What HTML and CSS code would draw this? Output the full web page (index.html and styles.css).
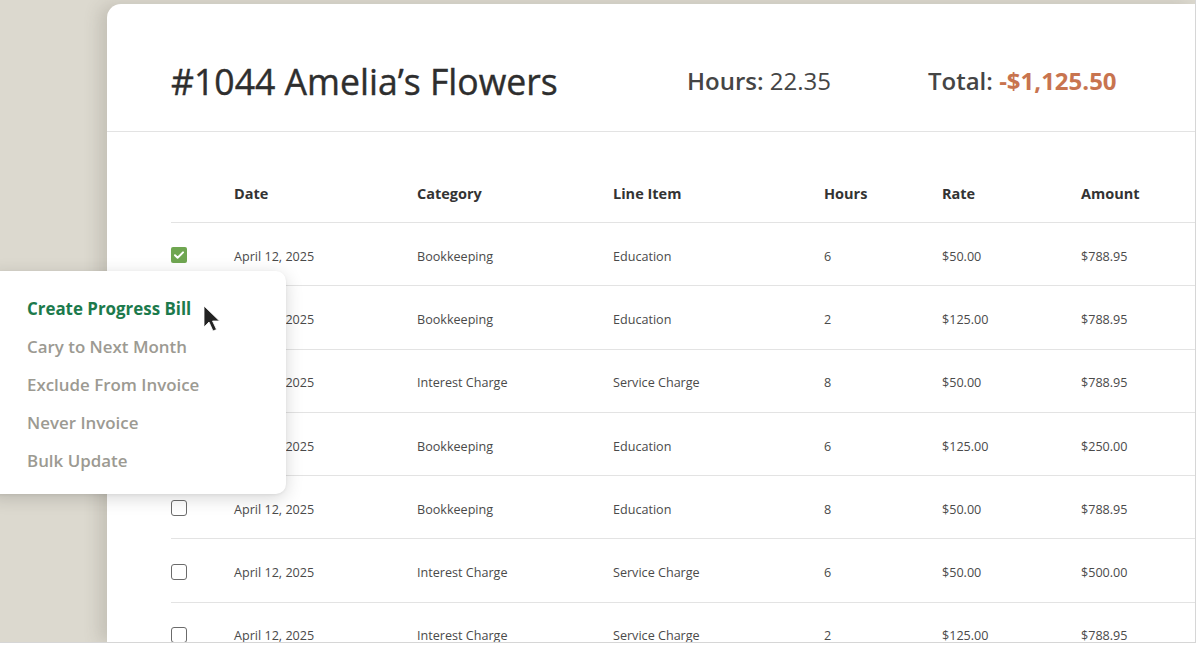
FILE: index.html
```html
<!DOCTYPE html>
<html>
<head>
<meta charset="utf-8">
<link rel="stylesheet" href="styles.css">
</head>
<body>
<div class="frame">
  <div class="card">
    <div class="card-head">
      <h1 class="title">#1044 Amelia’s Flowers</h1>
      <div class="stat">Hours: <span class="stat-val">22.35</span></div>
      <div class="stat">Total: <span class="stat-neg">-$1,125.50</span></div>
    </div>
    <div class="table">
      <div class="row head">
        <span></span><span>Date</span><span>Category</span><span>Line Item</span><span>Hours</span><span>Rate</span><span>Amount</span>
      </div>
      <div class="row"><span class="cb checked"><svg viewBox="0 0 16 16" width="16" height="16"><path d="M4 8.3l2.6 2.5L12 5.4" fill="none" stroke="#fff" stroke-width="2" stroke-linecap="round" stroke-linejoin="round"/></svg></span><span>April 12, 2025</span><span>Bookkeeping</span><span>Education</span><span>6</span><span>$50.00</span><span>$788.95</span></div>
      <div class="row"><span class="cb checked"></span><span>April 12, 2025</span><span>Bookkeeping</span><span>Education</span><span>2</span><span>$125.00</span><span>$788.95</span></div>
      <div class="row"><span class="cb checked"></span><span>April 12, 2025</span><span>Interest Charge</span><span>Service Charge</span><span>8</span><span>$50.00</span><span>$788.95</span></div>
      <div class="row"><span class="cb checked"></span><span>April 12, 2025</span><span>Bookkeeping</span><span>Education</span><span>6</span><span>$125.00</span><span>$250.00</span></div>
      <div class="row"><span class="cb"></span><span>April 12, 2025</span><span>Bookkeeping</span><span>Education</span><span>8</span><span>$50.00</span><span>$788.95</span></div>
      <div class="row"><span class="cb"></span><span>April 12, 2025</span><span>Interest Charge</span><span>Service Charge</span><span>6</span><span>$50.00</span><span>$500.00</span></div>
      <div class="row"><span class="cb"></span><span>April 12, 2025</span><span>Interest Charge</span><span>Service Charge</span><span>2</span><span>$125.00</span><span>$788.95</span></div>
    </div>
  </div>
  <div class="menu">
    <div class="menu-item active">Create Progress Bill</div>
    <div class="menu-item">Cary to Next Month</div>
    <div class="menu-item">Exclude From Invoice</div>
    <div class="menu-item">Never Invoice</div>
    <div class="menu-item">Bulk Update</div>
  </div>
  <svg class="cursor" viewBox="0 0 20 28" width="20" height="28"><path d="M2 1 L2 22 L7 17 L11 26 L14.5 24.5 L10.5 16 L17.5 16 Z" fill="#222" stroke="#fff" stroke-width="0.8" stroke-linejoin="round"/></svg>
</div>
</body>
</html>
```

FILE: styles.css
```css
* { box-sizing: border-box; }
html, body { margin: 0; padding: 0; background: #fff; }
body { font-family: "Open Sans", "Noto Sans", sans-serif; }

.frame {
  position: relative;
  width: 1196px;
  height: 643px;
  background: #dcd9cf;
  border-right: 1px solid #d6d6d6;
  border-bottom: 1px solid #d6d6d6;
  overflow: hidden;
  padding: 4px 0 0 107px;
}

.card {
  height: 100%;
  background: #fff;
  border-top-left-radius: 14px;
  box-shadow: -8px 0 16px rgba(90, 85, 70, 0.18);
}

.card-head {
  height: 128px;
  display: grid;
  grid-template-columns: 516px 241px auto;
  align-items: center;
  padding: 26px 0 0 64px;
  border-bottom: 1px solid #e3e3e3;
}

.title {
  margin: 0;
  font-size: 35.6px;
  font-weight: 400;
  color: #2e2e2e;
  -webkit-text-stroke: 0.4px #2e2e2e;
}

.stat {
  font-size: 24px;
  color: #454545;
  font-weight: 600;
}
.stat-val { font-weight: 400; }
.stat-neg { color: #c8744f; font-weight: 700; }

.table { padding-left: 64px; }

.row {
  display: grid;
  grid-template-columns: 63px 183px 196px 211px 118px 139px 1fr;
  align-items: center;
  height: 63.3px;
  border-bottom: 1px solid #e3e3e3;
  font-size: 12.6px;
  color: #4a4a4a;
}
.row > span { padding-top: 4px; }

.row.head {
  height: 91px;
  align-items: end;
  padding-bottom: 18px;
  font-size: 14.5px;
  font-weight: 700;
  color: #333;
  line-height: 20px;
}
.row.head > span { padding-top: 0; }

.cb {
  width: 16px;
  height: 16px;
  border: 1.5px solid #6b6b6b;
  border-radius: 3px;
  display: block;
  padding: 0 !important;
  margin-top: 2px;
}
.cb.checked {
  background: #6fa651;
  border: none;
  border-radius: 2px;
}
.cb svg { display: block; }

.menu {
  position: absolute;
  left: -12px;
  top: 271px;
  width: 298px;
  height: 223px;
  background: #fff;
  border-radius: 10px;
  box-shadow: 0 4px 18px rgba(0, 0, 0, 0.16), 0 1px 3px rgba(0,0,0,0.06);
  padding: 19px 0 0 39px;
}

.menu-item {
  height: 38px;
  line-height: 38px;
  font-size: 16.9px;
  font-weight: 600;
  color: #9c9a92;
}
.menu-item.active { color: #1c7a4c; font-weight: 700; }

.cursor {
  position: absolute;
  left: 202px;
  top: 305px;
}
```
